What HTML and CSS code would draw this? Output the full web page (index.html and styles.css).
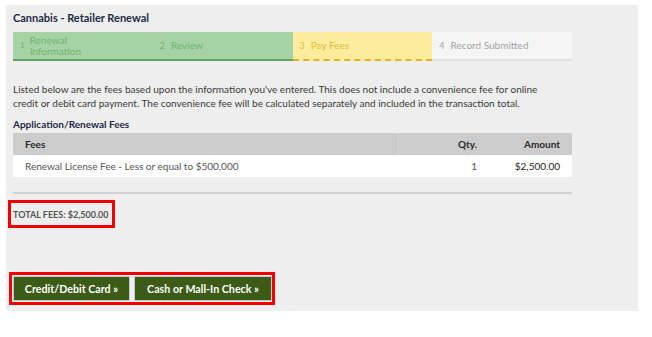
FILE: index.html
```html
<!DOCTYPE html>
<html>
<head>
<meta charset="utf-8">
<link rel="stylesheet" href="styles.css">
</head>
<body>
<div class="panel">
  <h1 class="title">Cannabis - Retailer Renewal</h1>
  <div class="steps">
    <div class="step done"><span class="num">1</span><span class="lbl">Renewal<br>Information</span></div>
    <div class="step done"><span class="num">2</span><span class="lbl">Review</span></div>
    <div class="step current"><span class="num">3</span><span class="lbl">Pay Fees</span></div>
    <div class="step todo"><span class="num">4</span><span class="lbl">Record Submitted</span></div>
  </div>
  <p class="intro">Listed below are the fees based upon the information you've entered. This does not include a convenience fee for online credit or debit card payment. The convenience fee will be calculated separately and included in the transaction total.</p>
  <h2 class="subhead">Application/Renewal Fees</h2>
  <table class="fees">
    <thead>
      <tr><th class="c-fee">Fees</th><th class="c-qty">Qty.</th><th class="c-amt">Amount</th></tr>
    </thead>
    <tbody>
      <tr><td class="c-fee">Renewal License Fee - Less or equal to $500,000</td><td class="c-qty">1</td><td class="c-amt amt">$2,500.00</td></tr>
    </tbody>
  </table>
  <div class="divider"></div>
  <div class="total">TOTAL FEES: $2,500.00</div>
  <div class="buttons">
    <button class="btn">Credit/Debit Card »</button>
    <button class="btn">Cash or Mall-In Check »</button>
  </div>
</div>
</body>
</html>
```
FILE: styles.css
```css
* { box-sizing: border-box; }
html, body { margin: 0; padding: 0; background: #fff; }
body { font-family: Lato, "Open Sans", Arial, sans-serif; }
.panel {
  margin: 5px 0 0 6px;
  width: 632px;
  height: 306px;
  background: #eeeeee;
  padding: 6px 7px 0 7px;
}
.title {
  margin: 0;
  font-size: 11px;
  font-weight: 700;
  color: #1c2a48;
  line-height: 14px;
  height: 21px;
}
.steps {
  display: flex;
  width: 559px;
  height: 29px;
}
.step {
  width: 140px;
  display: flex;
  align-items: center;
  padding-left: 7px;
  font-size: 10px;
  line-height: 11px;
}
.step .num { font-size: 9px; margin-right: 6px; }
.done { background: #a6d3a6; color: #6fb36f; border-bottom: 2px solid #5fa65f; }
.done:first-child .num { font-size: 8px; margin-right: 5px; }
.current { background: #fcec9e; color: #e2bd3a; border-bottom: 2px dashed #e2b51e; }
.todo { background: #f5f5f5; color: #a3a3a3; border-bottom: 2px solid #e2e2e2; }
.intro {
  margin: 21px 0 0 0;
  width: 545px;
  font-size: 10px;
  line-height: 14px;
  color: #3a3a3a;
}
.subhead {
  margin: 7px 0 0 0;
  font-size: 10px;
  font-weight: 700;
  color: #1c2a48;
  line-height: 14px;
}
.fees {
  margin-top: 2px;
  width: 559px;
  border-collapse: collapse;
  font-size: 10px;
}
.fees th {
  background: #cccccc;
  height: 22px;
  font-weight: 700;
  color: #2a2a2a;
  padding: 0 12px;
}
.fees td {
  background: #ffffff;
  height: 22px;
  color: #555;
  padding: 0 12px;
}
.c-fee { text-align: left; }
.fees th.c-qty { border-left: 1px solid #d6d6d6; }
.c-qty { width: 91px; text-align: right; }
.c-amt { width: 83px; text-align: right; }
.fees td.amt { color: #222; }
.divider {
  margin-top: 15px;
  width: 559px;
  height: 2px;
  background: #d2d2d2;
}
.total {
  margin: 6px 0 0 -5px;
  width: 107px;
  height: 28px;
  border: 3px solid #f00000;
  padding-left: 2px;
  display: flex;
  align-items: center;
  font-size: 9px;
  font-weight: 700;
  color: #555;
}
.buttons {
  margin: 44px 0 0 -4px;
  width: 266px;
  height: 33px;
  border: 3px solid #f00000;
  display: flex;
  align-items: center;
  gap: 4px;
  padding-left: 1px;
}
.btn {
  height: 25px;
  background: #3b5b16;
  border: 1px solid #c9c9c9;
  border-radius: 1px;
  color: #fff;
  font-family: Lato, "Open Sans", Arial, sans-serif;
  font-size: 10.7px;
  font-weight: 700;
  padding: 0 8px;
}
.btn:first-child { width: 117px; }
.btn:last-child { width: 138px; }
```
